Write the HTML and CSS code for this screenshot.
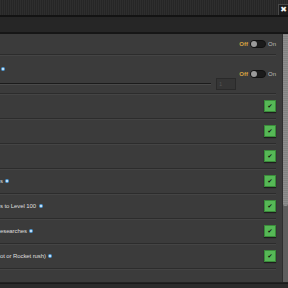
FILE: index.html
```html
<!DOCTYPE html>
<html lang="en">
<head>
    <meta charset="UTF-8">
    <meta name="viewport" content="width=device-width, initial-scale=1.0">
    <title>Settings</title>
    <link rel="stylesheet" href="styles.css">
</head>
<body>
    <!-- Title bar -->
    <div class="titlebar">
        <button class="close-button">&#x2716;</button>
    </div>
    <div class="tabbar"></div>

    <div class="window">
        <div class="content">
            <div class="row row-first">
                <div class="toggle"><span class="off">Off</span><span class="switch"><span class="knob"></span></span><span class="on">On</span></div>
            </div>
            <div class="row row-slider">
                <div class="left">
                    <div class="label"><span class="info"></span></div>
                    <div class="slider-line">
                        <div class="track"></div>
                        <div class="number">1</div>
                    </div>
                </div>
                <div class="toggle"><span class="off">Off</span><span class="switch"><span class="knob"></span></span><span class="on">On</span></div>
            </div>
            <div class="row">
                <div class="check">&#10004;</div>
            </div>
            <div class="row">
                <div class="check">&#10004;</div>
            </div>
            <div class="row">
                <div class="check">&#10004;</div>
            </div>
            <div class="row">
                <div class="label">s <span class="info"></span></div>
                <div class="check">&#10004;</div>
            </div>
            <div class="row">
                <div class="label">s to Level 100 <span class="info"></span></div>
                <div class="check">&#10004;</div>
            </div>
            <div class="row">
                <div class="label">esearches <span class="info"></span></div>
                <div class="check">&#10004;</div>
            </div>
            <div class="row">
                <div class="label">ot or Rocket rush) <span class="info"></span></div>
                <div class="check">&#10004;</div>
            </div>
            <div class="row row-last"></div>
        </div>
        <div class="scrollbar"><div class="thumb"></div></div>
    </div>
    <div class="footer"></div>
</body>
</html>
```
FILE: styles.css
```css
body {
    margin: 0;
    font-family: "Liberation Sans", Arial, sans-serif;
    background-color: #3b3b3b;
    color: #dedede;
    overflow: hidden;
    height: 288px;
}
.titlebar {
    height: 15px;
    background: repeating-linear-gradient(90deg, #2e2e2e 0, #2e2e2e 1px, #262626 1px, #262626 2px);
    border-bottom: 2px solid #131313;
    display: flex;
    justify-content: flex-end;
    align-items: flex-end;
}
.close-button {
    width: 10px;
    height: 11px;
    padding: 0;
    margin: 0;
    border: 1px solid #4a4a4a;
    border-right: none;
    border-bottom: none;
    background-color: #1c1c1c;
    color: #f2f2f2;
    font-size: 8px;
    font-weight: bold;
    line-height: 10px;
    text-align: center;
    font-family: "DejaVu Sans", sans-serif;
}
.tabbar {
    height: 15px;
    background-color: #262626;
    border-bottom: 2px solid #161616;
}
.window {
    display: flex;
    height: 248px;
    border-bottom: 1px solid #232323;
}
.content {
    flex: 1;
    margin-right: 6px;
    font-size: 6px;
    letter-spacing: -0.1px;
}
.row {
    display: flex;
    align-items: center;
    justify-content: space-between;
    height: 24px;
    border-bottom: 1px solid #2c2c2c;
    box-shadow: 0 1px 0 #444444;
}
.row-first {
    height: 20px;
}
.row-slider {
    height: 38px;
}
.row-last {
    height: 14px;
    border-bottom: none;
    box-shadow: none;
}
.label {
    white-space: nowrap;
}
.info {
    display: inline-block;
    width: 4px;
    height: 4px;
    border-radius: 50%;
    background: radial-gradient(circle, #d6ecff 0, #d6ecff 0.6px, #4f9bd6 1.2px);
    vertical-align: middle;
    margin-left: 1px;
}
.left {
    flex: 1;
    display: flex;
    flex-direction: column;
    gap: 6px;
    margin-top: 8px;
}
.slider-line {
    display: flex;
    align-items: center;
    gap: 5px;
    margin-right: 3px;
}
.track {
    flex: 1;
    height: 1px;
    background-color: #1b1b1b;
    border-bottom: 1px solid #4a4a4a;
}
.number {
    width: 16px;
    height: 10px;
    border: 1px solid #2a2a2a;
    background-color: #353535;
    color: #555555;
    font-size: 5px;
    line-height: 10px;
    padding-left: 2px;
    box-sizing: content-box;
}
.toggle {
    display: flex;
    align-items: center;
    margin-left: auto;
    font-size: 6px;
    letter-spacing: 0;
}
.off {
    color: #d9a441;
    font-weight: bold;
    margin-right: 2px;
}
.on {
    color: #bdbdbd;
    margin-left: 2px;
}
.switch {
    width: 14px;
    height: 6px;
    border-radius: 4px;
    background-color: #1b1b1b;
    border: 1px solid #111111;
    display: flex;
    align-items: center;
}
.knob {
    width: 6px;
    height: 6px;
    border-radius: 50%;
    background-color: #9a9a9a;
}
.check {
    width: 10px;
    height: 10px;
    margin-left: auto;
    background-color: #56b856;
    border: 1px solid #3a8a3a;
    box-shadow: 0 1px 1px rgba(0, 0, 0, 0.5);
    color: #111111;
    font-size: 6px;
    line-height: 10px;
    text-align: center;
    font-family: "DejaVu Sans", sans-serif;
}
.scrollbar {
    width: 5px;
    background-color: #5e5e5e;
    border-left: 1px solid #2e2e2e;
}
.thumb {
    height: 172px;
    border-radius: 0 0 2px 2px;
    background: repeating-linear-gradient(0deg, #8e8e8e 0, #8e8e8e 1px, #828282 1px, #828282 2px);
}
.footer {
    height: 6px;
    background-color: #2b2b2b;
    border-top: 1px solid #1a1a1a;
}
```
